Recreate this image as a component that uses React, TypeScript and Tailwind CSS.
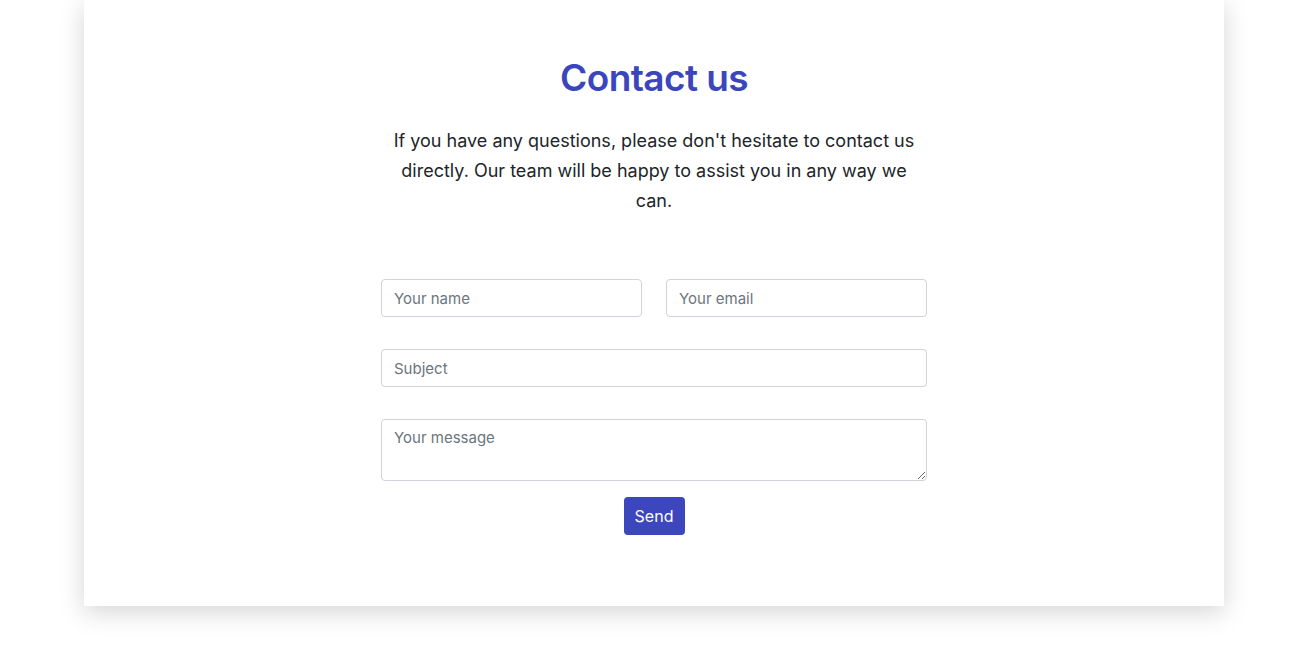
export default function App() {
  return (
    <div className="min-h-screen bg-white font-['Inter',sans-serif]">
      <div className="ml-[84px] w-[1140px] bg-white shadow-[0_6px_24px_rgba(0,0,0,0.17)] pt-[55px] pb-[71px]">
        <h1 className="text-center text-[37px] leading-[46px] font-semibold tracking-[-0.6px] text-[#3b46be]">
          Contact us
        </h1>
        <p className="mx-auto mt-[25px] w-[540px] text-center text-[18px] leading-[30px] text-[#212529]">
          If you have any questions, please don't hesitate to contact us directly. Our team will be happy to assist you in any way we can.
        </p>

        <form className="mx-auto mt-[63px] flex w-[546px] flex-col">
          <div className="grid grid-cols-2 gap-6">
            <input
              type="text"
              placeholder="Your name"
              className="h-[38px] rounded border border-[#ced4da] px-3 text-[15px] text-[#212529] placeholder:text-[#6c757d] outline-none"
            />
            <input
              type="email"
              placeholder="Your email"
              className="h-[38px] rounded border border-[#ced4da] px-3 text-[15px] text-[#212529] placeholder:text-[#6c757d] outline-none"
            />
          </div>
          <input
            type="text"
            placeholder="Subject"
            className="mt-8 h-[38px] rounded border border-[#ced4da] px-3 text-[15px] text-[#212529] placeholder:text-[#6c757d] outline-none"
          />
          <textarea
            placeholder="Your message"
            className="mt-8 block h-[62px] rounded border border-[#ced4da] px-3 py-[7px] text-[15px] leading-[22px] text-[#212529] placeholder:text-[#6c757d] outline-none"
          />
          <div className="mt-4 flex justify-center">
            <button
              type="button"
              className="h-[38px] w-[61px] rounded bg-[#3c46bd] text-[16px] text-white"
            >
              Send
            </button>
          </div>
        </form>
      </div>
    </div>
  );
}
